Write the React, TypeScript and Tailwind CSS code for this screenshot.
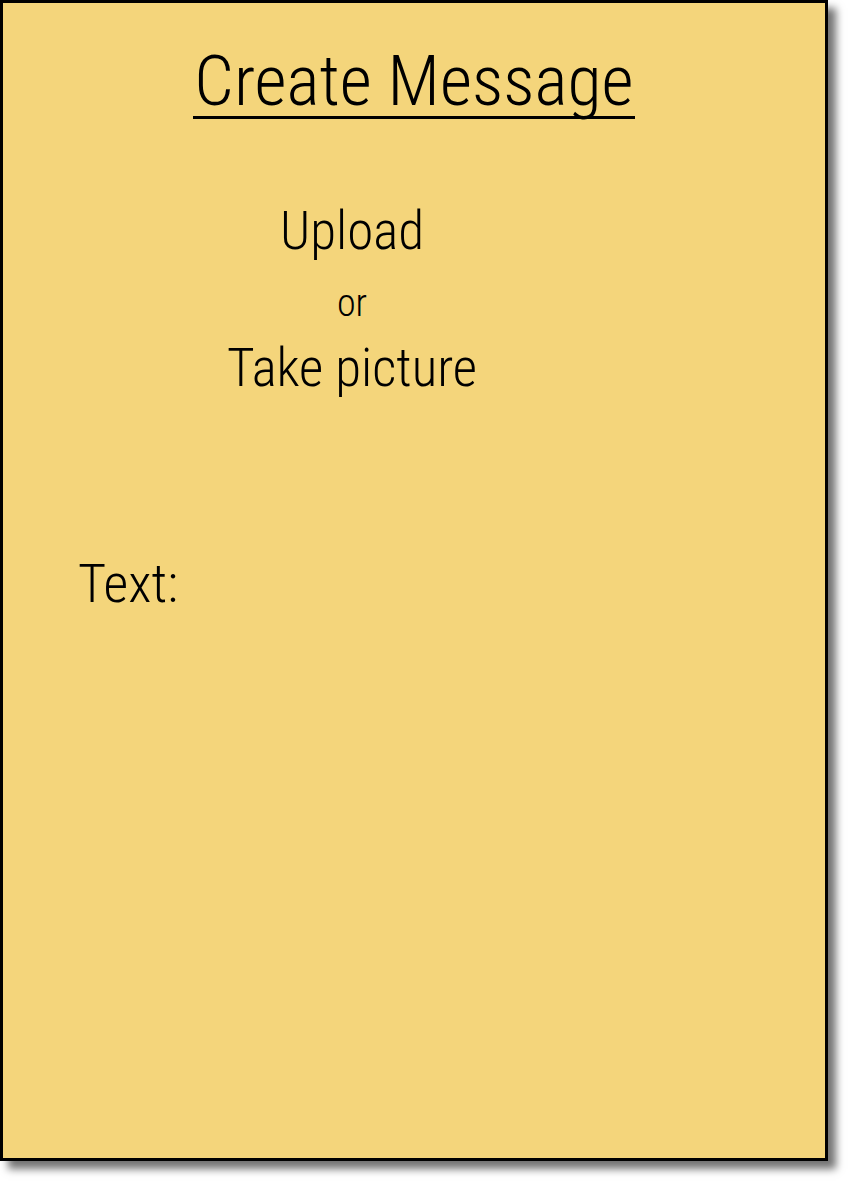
import React from 'react';

const App: React.FC = () => {
  return (
    <div className="w-[852px] h-[1185px] bg-white font-['Roboto_Condensed','DejaVu_Sans_Condensed',sans-serif] font-light text-black">
      {/* Card */}
      <div className="w-[828px] h-[1161px] border-[3px] border-black bg-[#f4d57b] shadow-[8px_8px_8px_rgba(0,0,0,0.55)] flex flex-col">
        <div className="flex justify-center pt-[43px]">
          <h1 className="inline-block border-b-[3px] border-black text-[70px] leading-none px-[1px] font-light">
            Create Message
          </h1>
        </div>

        {/* Picture choice */}
        <div className="w-[698px] flex flex-col items-center mt-[86px]">
          <div className="text-[53px] leading-none">Upload</div>
          <div className="text-[38px] leading-none mt-[26px]">or</div>
          <div className="text-[53px] leading-none mt-[20px]">Take picture</div>
        </div>

        <div className="pl-[75px] mt-[162px] text-[54px] leading-none">Text:</div>
      </div>
    </div>
  );
};

export default App;
